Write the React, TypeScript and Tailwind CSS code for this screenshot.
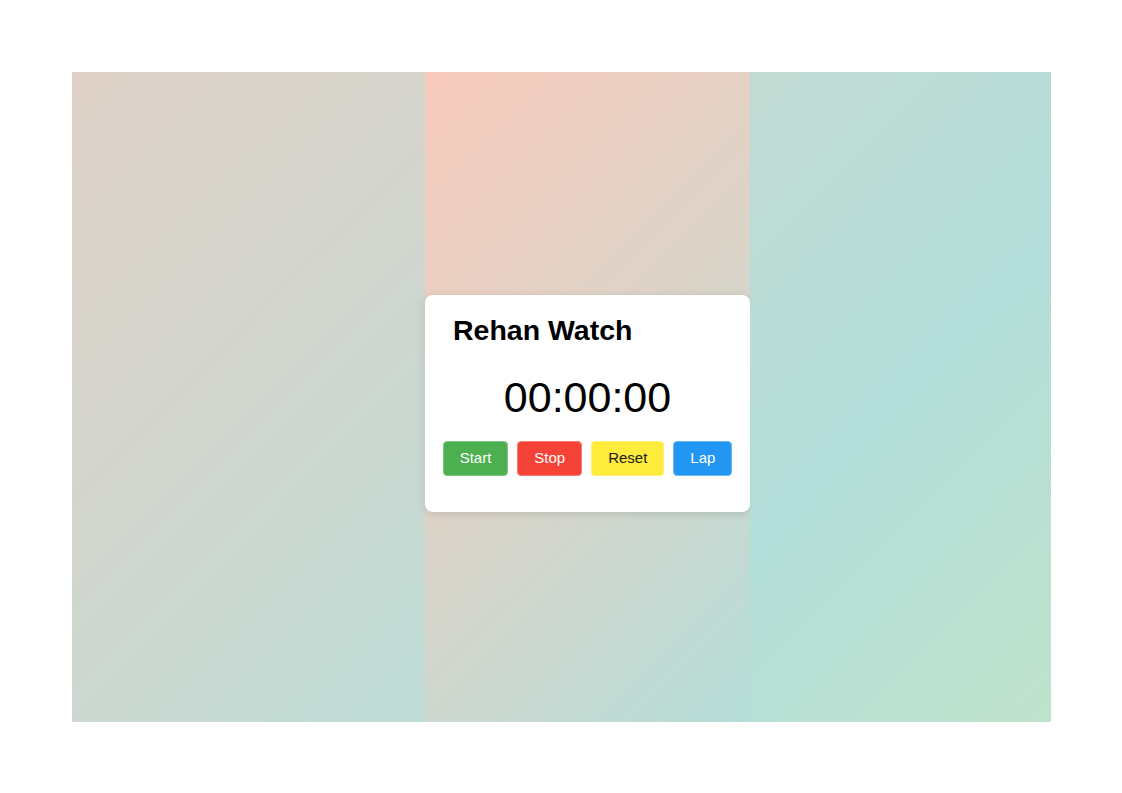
import React from "react";

const buttons = [
  { label: "Start", cls: "bg-[#4caf50] border-[#7fc882] text-white" },
  { label: "Stop", cls: "bg-[#f44336] border-[#f77d74] text-white" },
  { label: "Reset", cls: "bg-[#ffeb3b] border-[#fff176] text-[#1a1a1a]" },
  { label: "Lap", cls: "bg-[#2196f3] border-[#6bbaf7] text-white" },
];

const App: React.FC = () => (
  <div className="w-full min-h-[793px] bg-white p-[72px] pr-[71px] font-['Liberation_Sans',Arial,sans-serif]">
    {/* Tiled background */}
    <div className="flex h-[650px] w-[979px]">
      <div className="w-[353px] h-full bg-[linear-gradient(135deg,#e0d2c8,#d1d6ce,#bddcd6)]" />

      {/* Stopwatch column */}
      <div className="w-[325px] h-full flex flex-col justify-center pt-[13px] bg-[linear-gradient(135deg,#f9cbbc,#dbd4c9,#b4ddd8)]">
        <div className="bg-white rounded-lg shadow-[0_2px_10px_rgba(0,0,0,0.12)] pt-5 pb-[36px] px-[18px]">
          <h2 className="pl-[10px] text-[28.5px] font-bold text-black leading-[31px]">
            Rehan Watch
          </h2>
          <div className="mt-[28px] text-center text-[43px] leading-[47px] text-black">
            00:00:00
          </div>
          <div className="mt-5 flex justify-center gap-[9px]">
            {buttons.map((b) => (
              <button
                key={b.label}
                className={`h-[35px] px-4 rounded border text-[15px] ${b.cls}`}
              >
                {b.label}
              </button>
            ))}
          </div>
        </div>
      </div>

      <div className="w-[301px] h-full bg-[linear-gradient(135deg,#c2dbd3,#b2ddd9,#bfe3cc)]" />
    </div>
  </div>
);

export default App;
